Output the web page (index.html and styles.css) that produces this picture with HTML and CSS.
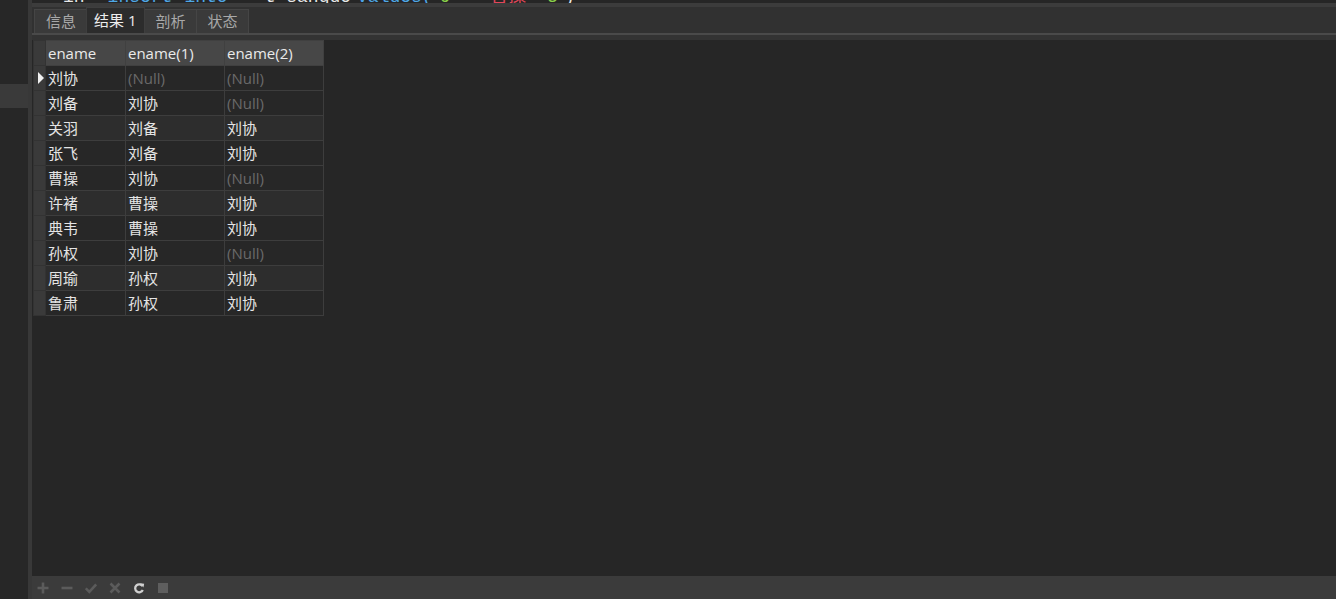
FILE: index.html
```html
<!DOCTYPE html>
<html lang="zh">
<head>
<meta charset="utf-8">
<link rel="stylesheet" href="styles.css">
</head>
<body>
<div class="app">
  <aside class="sidebar"><div class="side-sel"></div></aside>
  <div class="divider"></div>
  <main class="main">
    <div class="code">
      <div class="code-line"><span class="c-w" style="margin-left:31px">in</span><span class="c-b" style="margin-left:23px">insert</span><span class="c-b" style="margin-left:12px">into</span><span class="c-w" style="margin-left:37px">t_sanguo</span><span class="c-b" style="margin-left:6px">values(</span><span class="c-g" style="margin-left:7px">9</span><span class="c-r" style="margin-left:29px">'曹操'</span><span class="c-g" style="margin-left:10px">3</span><span class="c-w" style="margin-left:6px">)</span></div>
    </div>
    <div class="sep"></div>
    <nav class="tabbar">
      <div class="tab">信息</div>
      <div class="tab active">结果 1</div>
      <div class="tab">剖析</div>
      <div class="tab">状态</div>
    </nav>
    <div class="tabline"></div>
    <div class="gap"></div>
    <section class="grid-area">
      <table class="grid">
        <colgroup>
          <col class="c0"><col class="c1"><col class="c2"><col class="c3">
        </colgroup>
        <thead>
          <tr><th class="rh"></th><th>ename</th><th>ename(1)</th><th>ename(2)</th></tr>
        </thead>
        <tbody>
          <tr class="cur"><td class="rh"><span class="tri"></span></td><td>刘协</td><td class="null">(Null)</td><td class="null">(Null)</td></tr>
          <tr><td class="rh"></td><td>刘备</td><td>刘协</td><td class="null">(Null)</td></tr>
          <tr class="alt"><td class="rh"></td><td>关羽</td><td>刘备</td><td>刘协</td></tr>
          <tr><td class="rh"></td><td>张飞</td><td>刘备</td><td>刘协</td></tr>
          <tr><td class="rh"></td><td>曹操</td><td>刘协</td><td class="null">(Null)</td></tr>
          <tr class="alt"><td class="rh"></td><td>许褚</td><td>曹操</td><td>刘协</td></tr>
          <tr><td class="rh"></td><td>典韦</td><td>曹操</td><td>刘协</td></tr>
          <tr><td class="rh"></td><td>孙权</td><td>刘协</td><td class="null">(Null)</td></tr>
          <tr class="alt"><td class="rh"></td><td>周瑜</td><td>孙权</td><td>刘协</td></tr>
          <tr><td class="rh"></td><td>鲁肃</td><td>孙权</td><td>刘协</td></tr>
        </tbody>
      </table>
    </section>
    <footer class="toolbar">
      <svg class="ic" viewBox="0 0 12 12"><path d="M6 0.5v11M0.5 6h11" stroke="#5b5b5b" stroke-width="2.6"/></svg>
      <svg class="ic" viewBox="0 0 12 12"><path d="M0.5 6h11" stroke="#5b5b5b" stroke-width="2.6"/></svg>
      <svg class="ic" viewBox="0 0 12 12"><path d="M0.8 6.3l3.5 3.5L11.2 2.4" fill="none" stroke="#5b5b5b" stroke-width="2.6"/></svg>
      <svg class="ic" viewBox="0 0 12 12"><path d="M1.5 1.5l9 9M10.5 1.5l-9 9" stroke="#5b5b5b" stroke-width="2.6"/></svg>
      <svg class="ic" viewBox="0 0 12 12"><path d="M9.6 4.2A4 4 0 1 0 9.8 8" fill="none" stroke="#d0d0d0" stroke-width="2.3"/><path d="M7 1.3l4.2 0.4-0.8 3.9z" fill="#d0d0d0"/></svg>
      <svg class="ic" viewBox="0 0 12 12"><rect x="1" y="1" width="10" height="10" fill="#5e5e5e"/></svg>
    </footer>
  </main>
</div>
</body>
</html>
```
FILE: styles.css
```css
html, body {
  margin: 0;
  padding: 0;
  background: #262626;
  font-family: "Open Sans", "Noto Sans CJK SC", sans-serif;
}

.app {
  display: flex;
  width: 1336px;
  height: 599px;
  overflow: hidden;
}

.sidebar {
  width: 28px;
  background: #272727;
  flex: none;
}

.side-sel {
  margin-top: 84px;
  height: 24px;
  background: #3a3a3a;
}

.divider {
  width: 4px;
  background: #383838;
  flex: none;
}

.main {
  flex: 1;
  display: flex;
  flex-direction: column;
  min-width: 0;
}

.code {
  height: 3px;
  overflow: hidden;
  background: #262626;
  flex: none;
}

.code-line {
  margin-top: -13px;
  font-family: "Liberation Mono", "Noto Sans CJK SC", monospace;
  font-size: 18px;
  line-height: 20px;
  white-space: nowrap;
}

.c-w { color: #e8e8e8; }
.c-b { color: #4fa8e6; }
.c-g { color: #8ad04a; }
.c-r { color: #e0465a; }

.sep {
  height: 4px;
  background: #3c3c3c;
  flex: none;
}

.tabbar {
  height: 26px;
  background: #313131;
  display: flex;
  align-items: flex-end;
  padding-left: 2px;
  flex: none;
}

.tab {
  height: 24px;
  box-sizing: border-box;
  padding: 0 10px 0 11px;
  border: 1px solid #454545;
  border-bottom: none;
  background: #3a3a3a;
  color: #a8a8a8;
  font-size: 15px;
  line-height: 23px;
  margin-right: -1px;
}

.tab.active {
  height: 26px;
  background: #2c2c2c;
  color: #ececec;
  padding: 0 7px;
  border-color: #3e3e3e;
  line-height: 24px;
  position: relative;
  z-index: 1;
}

.tabline {
  height: 2px;
  background: #4a4a4a;
  flex: none;
}

.gap {
  height: 5px;
  background: #333333;
  flex: none;
}

.grid-area {
  flex: 1;
  background: #262626;
  padding-left: 1px;
  min-height: 0;
}

.grid {
  border-collapse: collapse;
  table-layout: fixed;
  width: 291px;
  font-size: 15px;
}

.c0 { width: 12px; }
.c1 { width: 80px; }
.c2 { width: 99px; }
.c3 { width: 99px; }

.grid th,
.grid td {
  height: 24px;
  padding: 0 0 0 2px;
  border: 1px solid #3d3d3d;
  text-align: left;
  font-weight: normal;
  white-space: nowrap;
  overflow: hidden;
  line-height: 23px;
  color: #e4e4e4;
  background: #272727;
}

.grid th {
  background: #474747;
  color: #eaeaea;
  border-color: #404040;
}

.grid tr.alt td {
  background: #2d2d2d;
}

.grid .rh,
.grid tr.alt td.rh,
.grid th.rh {
  background: #3a3a3a;
  padding: 0;
  border-color: #333;
}

.grid td.null {
  color: #6a6a6a;
}

.tri {
  display: block;
  width: 0;
  height: 0;
  margin-left: 4px;
  border-top: 6px solid transparent;
  border-bottom: 6px solid transparent;
  border-left: 6px solid #f0f0f0;
}

.toolbar {
  height: 23px;
  background: #3b3b3b;
  display: flex;
  align-items: center;
  padding-left: 5px;
  gap: 12px;
  flex: none;
}

.ic {
  width: 12px;
  height: 12px;
  display: block;
}
```
